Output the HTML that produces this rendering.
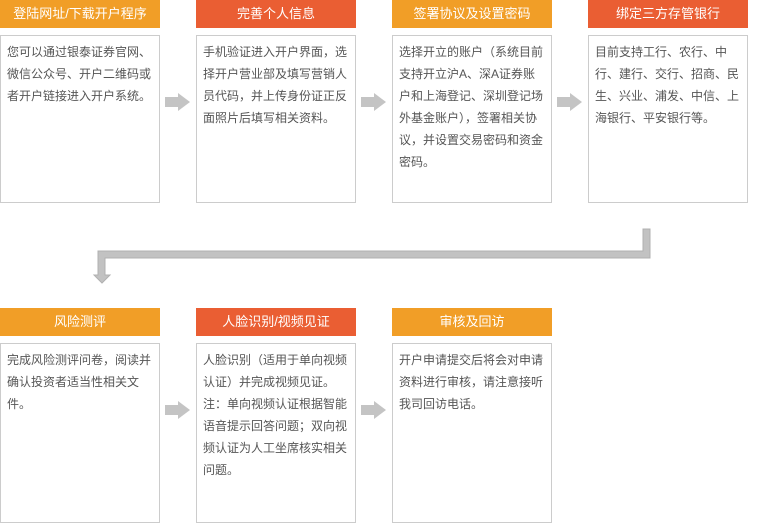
<!DOCTYPE html>
<html><head><meta charset="utf-8"><style>
body{margin:0;width:778px;height:510px;background:#fff;position:relative;overflow:hidden;font-family:"Liberation Sans","Noto Sans CJK SC",sans-serif}
.h{position:absolute;width:160px;height:28px;line-height:28px;color:#fff;text-align:center;font-size:13px}
.o{background:#f19e27}.r{background:#ea5e33}
.b{position:absolute;width:146px;border:1px solid #ccc;padding:5px 6px;box-sizing:border-box;font-size:12px;line-height:22px;color:#555}
.ar{position:absolute;width:26px;height:18px}
</style></head><body>
<div class="h o" style="left:0;top:0">登陆网址/下载开户程序</div>
<div class="h r" style="left:196px;top:0">完善个人信息</div>
<div class="h o" style="left:392px;top:0">签署协议及设置密码</div>
<div class="h r" style="left:588px;top:0">绑定三方存管银行</div>
<div class="b" style="left:0;top:35px;width:160px;height:168px">您可以通过银泰证券官网、微信公众号、开户二维码或者开户链接进入开户系统。</div>
<div class="b" style="left:196px;top:35px;width:160px;height:168px">手机验证进入开户界面，选择开户营业部及填写营销人员代码，并上传身份证正反面照片后填写相关资料。</div>
<div class="b" style="left:392px;top:35px;width:160px;height:168px">选择开立的账户（系统目前支持开立沪A、深A证券账户和上海登记、深圳登记场外基金账户），签署相关协议，并设置交易密码和资金密码。</div>
<div class="b" style="left:588px;top:35px;width:160px;height:168px">目前支持工行、农行、中行、建行、交行、招商、民生、兴业、浦发、中信、上海银行、平安银行等。</div>
<svg class="ar" style="left:165px;top:93px" viewBox="0 0 26 18"><path d="M0 4h13V0l12 9-12 9v-4H0z" fill="#c4c4c4"/></svg>
<svg class="ar" style="left:361px;top:93px" viewBox="0 0 26 18"><path d="M0 4h13V0l12 9-12 9v-4H0z" fill="#c4c4c4"/></svg>
<svg class="ar" style="left:557px;top:93px" viewBox="0 0 26 18"><path d="M0 4h13V0l12 9-12 9v-4H0z" fill="#c4c4c4"/></svg>
<svg style="position:absolute;left:0;top:0" width="778" height="300"><path d="M643 229h7v29H105v17h5l-8 8-8-8h4v-24h545z" fill="#c2c2c2" stroke="#b0b0b0" stroke-width="1"/></svg>
<div class="h o" style="left:0;top:308px">风险测评</div>
<div class="h r" style="left:196px;top:308px">人脸识别/视频见证</div>
<div class="h o" style="left:392px;top:308px">审核及回访</div>
<div class="b" style="left:0;top:343px;width:160px;height:180px">完成风险测评问卷，阅读并确认投资者适当性相关文件。</div>
<div class="b" style="left:196px;top:343px;width:160px;height:180px">人脸识别（适用于单向视频认证）并完成视频见证。注：单向视频认证根据智能语音提示回答问题；双向视频认证为人工坐席核实相关问题。</div>
<div class="b" style="left:392px;top:343px;width:160px;height:180px">开户申请提交后将会对申请资料进行审核，请注意接听我司回访电话。</div>
<svg class="ar" style="left:165px;top:401px" viewBox="0 0 26 18"><path d="M0 4h13V0l12 9-12 9v-4H0z" fill="#c4c4c4"/></svg>
<svg class="ar" style="left:361px;top:401px" viewBox="0 0 26 18"><path d="M0 4h13V0l12 9-12 9v-4H0z" fill="#c4c4c4"/></svg>
</body></html>
